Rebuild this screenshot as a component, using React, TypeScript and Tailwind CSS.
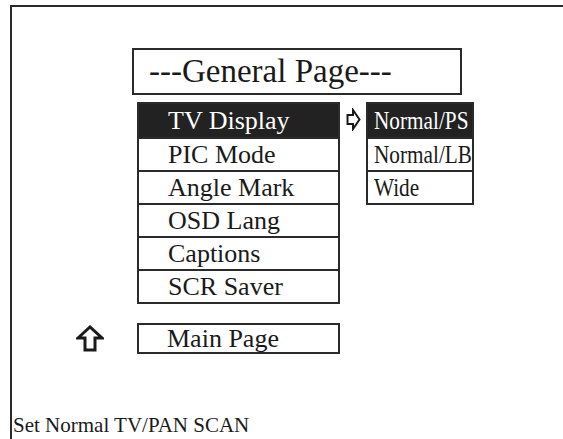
import React from "react";

const items = ["TV Display", "PIC Mode", "Angle Mark", "OSD Lang", "Captions", "SCR Saver"];
const sub = ["Normal/PS", "Normal/LB", "Wide"];

export default function App() {
  return (
    <div className="w-[563px] h-[439px] bg-white overflow-hidden text-[#1a1a1a]" style={{ fontFamily: '"Liberation Serif", "Times New Roman", serif' }}>
      <div className="ml-[10px] mt-[5px] h-[434px] border-l-2 border-t-2 border-[#2b2b2b] flex flex-col">
        <div className="ml-[120px] mt-[41px] w-[330px] h-[47px] border-2 border-[#2b2b2b] flex items-center pl-[15px] text-[33px] leading-none pb-[1px]">
          ---General Page---
        </div>
        <div className="flex mt-[7px]">
          <div className="ml-[125px] w-[203px] border-2 border-[#2b2b2b] flex flex-col">
            {items.map((t, i) => (
              <div
                key={t}
                className={
                  "h-[33px] flex items-center pl-[29px] text-[26px] leading-none " +
                  (i === 0 ? "bg-[#222] text-white" : "border-t-2 border-[#2b2b2b]")
                }
              >
                {t}
              </div>
            ))}
          </div>
          <div className="w-[26px] flex justify-center pt-[6px]">
            <svg width="15" height="23" viewBox="0 0 15 23">
              <path d="M1.5 7 H7 V2 L13.5 11.5 L7 21 V16 H1.5 Z" fill="white" stroke="#1a1a1a" strokeWidth="2" strokeLinejoin="miter" />
            </svg>
          </div>
          <div className="w-[108px] border-2 border-[#2b2b2b] self-start flex flex-col">
            {sub.map((t, i) => (
              <div
                key={t}
                className={
                  "h-[33px] flex items-center pl-[6px] text-[25px] leading-none whitespace-nowrap " +
                  (i === 0 ? "bg-[#222] text-white" : "border-t-2 border-[#2b2b2b]")
                }
              >
                <span className="inline-block origin-left scale-x-[0.85]">{t}</span>
              </div>
            ))}
          </div>
        </div>
        <div className="flex items-center mt-[19px]">
          <div className="ml-[63px] w-[30px] flex justify-center">
            <svg width="28" height="27" viewBox="0 0 28 27">
              <path d="M2 13 L14 2 L26 13 H19 V25 H9 V13 Z" fill="white" stroke="#1a1a1a" strokeWidth="3" strokeLinejoin="miter" />
            </svg>
          </div>
          <div className="ml-[32px] w-[203px] h-[31px] border-2 border-[#2b2b2b] flex items-center pl-[28px] text-[26px] leading-none">
            Main Page
          </div>
        </div>
        <div className="mt-auto mb-[3px] ml-[1px] text-[21px] leading-none">Set Normal TV/PAN SCAN</div>
      </div>
    </div>
  );
}
